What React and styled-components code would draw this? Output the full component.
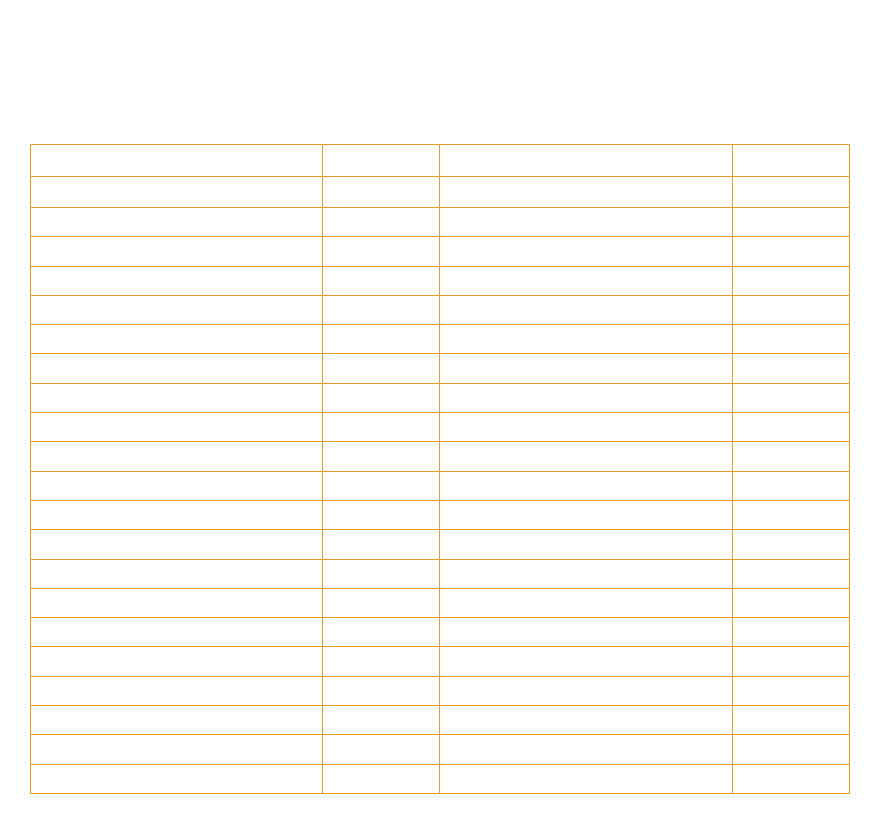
import React from 'react'
import styled, { createGlobalStyle } from 'styled-components'

const GlobalStyle = createGlobalStyle`
  html, body {
    margin: 0;
    padding: 0;
    background: #ffffff;
    font-family: 'Liberation Sans', Arial, sans-serif;
  }
`

const Page = styled.div`
  box-sizing: border-box;
  width: 100%;
  padding-top: 144px;
  display: flex;
  justify-content: center;
`

const Table = styled.table`
  width: 820px;
  border-collapse: collapse;
  table-layout: fixed;
`

const Cell = styled.td`
  border: 1px solid #e89b2a;
  padding: 0;
  height: ${props => props.h}px;
  box-sizing: border-box;
`

const HeadCell = styled.th`
  border: 1px solid #e89b2a;
  padding: 0;
  height: 32px;
  box-sizing: border-box;
  font-weight: 700;
`

const widths = ['35.73%', '14.27%', '35.73%', '14.27%']
const rows = Array.from({ length: 21 }, (_, i) => i)

const App = () => {
  return (
    <>
      <GlobalStyle />
      <Page>
        <Table>
          <colgroup>
            {widths.map((w, i) => <col key={i} style={{ width: w }} />)}
          </colgroup>
          <thead>
            <tr>
              {widths.map((_, i) => <HeadCell key={i} />)}
            </tr>
          </thead>
          <tbody>
            {rows.map(r => (
              <tr key={r}>
                {widths.map((_, i) => <Cell key={i} h={r === 0 ? 31 : 29.3} />)}
              </tr>
            ))}
          </tbody>
        </Table>
      </Page>
    </>
  )
}

export default App
